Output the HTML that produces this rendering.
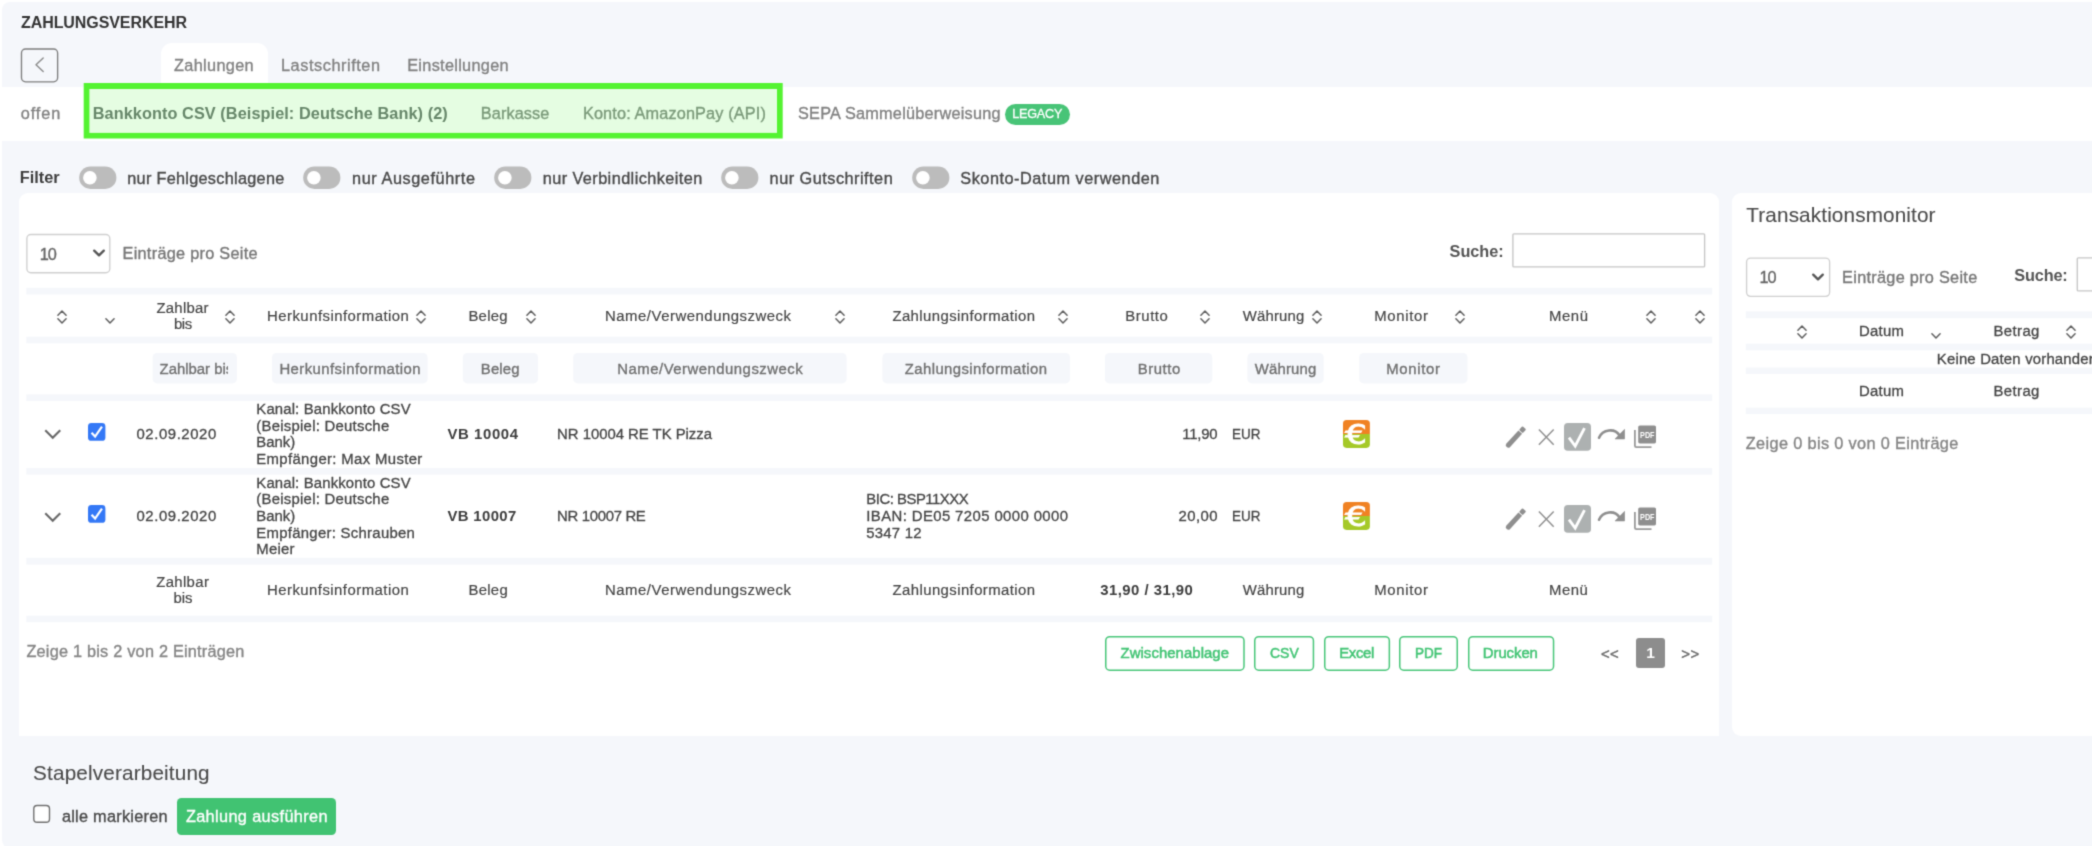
<!DOCTYPE html>
<html lang="de"><head><meta charset="utf-8"><title>Zahlungsverkehr</title>
<style>
html,body{margin:0;padding:0;}
body{width:2092px;height:846px;overflow:hidden;background:#fff;position:relative;font-family:"Liberation Sans", sans-serif;}
#root{background:#fff;position:absolute;left:0;top:0;width:2092px;height:846px;overflow:hidden;will-change:transform;filter:url(#soft);}
.a{position:absolute;box-sizing:border-box;}
.t{white-space:pre;line-height:20px;height:20px;}
</style></head><body>
<svg width="0" height="0" style="position:absolute"><defs><filter id="soft" x="0" y="0" width="100%" height="100%" color-interpolation-filters="sRGB"><feConvolveMatrix order="3" kernelMatrix="0.0256 0.1088 0.0256 0.1088 0.4624 0.1088 0.0256 0.1088 0.0256" edgeMode="duplicate" preserveAlpha="true"/></filter></defs></svg>
<div id="root">
<div class="a" style="left:2.00px;top:2.00px;width:2110.00px;height:846.00px;background:#f5f7fb;border-radius:8px;"></div>
<span class="a t" style="top:12.96px;font-size:16px;color:#333;font-weight:700;letter-spacing:-0.080px;left:21.00px;">ZAHLUNGSVERKEHR</span>
<svg class="a" style="left:19.00px;top:47.00px;" width="41.30" height="37.50" viewBox="0 0 41.3 37.5"><rect x="2.48" y="1.97" width="36.15" height="32.85" rx="4" fill="#f5f7fb" stroke="#7e7e7e" stroke-width="1.35"/></svg>
<svg class="a" style="left:30.00px;top:55.00px;" width="20.00" height="20.00" viewBox="0 0 20 20"><path d="M13.2 3 L6 9.8 L13.2 16.6" fill="none" stroke="#8a8a8a" stroke-width="1.4" stroke-linecap="round" stroke-linejoin="round"/></svg>
<div class="a" style="left:160.50px;top:42.70px;width:107.20px;height:52.30px;background:#fff;border-radius:11px 11px 0 0;"></div>
<span class="a t" style="top:55.32px;font-size:16.3px;color:#828282;-webkit-text-stroke:0.35px currentColor;letter-spacing:0.331px;left:174.00px;">Zahlungen</span>
<span class="a t" style="top:55.32px;font-size:16.3px;color:#828282;-webkit-text-stroke:0.35px currentColor;letter-spacing:0.557px;left:281.00px;">Lastschriften</span>
<span class="a t" style="top:55.32px;font-size:16.3px;color:#828282;-webkit-text-stroke:0.35px currentColor;letter-spacing:0.303px;left:407.20px;">Einstellungen</span>
<div class="a" style="left:2.00px;top:87.00px;width:2090.00px;height:53.60px;background:#fff;"></div>
<span class="a t" style="top:103.22px;font-size:16.3px;color:#828282;-webkit-text-stroke:0.35px currentColor;letter-spacing:0.895px;left:20.70px;">offen</span>
<svg class="a" style="left:83.00px;top:82.00px;" width="701.00" height="58.00" viewBox="0 0 701 58"><rect x="0.7" y="1" width="699" height="55.5" fill="#54f331"/><rect x="6.4" y="7" width="687.6" height="43.9" fill="#e5fde2"/></svg>
<span class="a t" style="top:103.22px;font-size:16.3px;color:#67876a;font-weight:700;letter-spacing:0.073px;left:92.70px;">Bankkonto CSV (Beispiel: Deutsche Bank) (2)</span>
<span class="a t" style="top:103.22px;font-size:16.3px;color:#7b9a7a;-webkit-text-stroke:0.35px currentColor;letter-spacing:0.104px;left:480.80px;">Barkasse</span>
<span class="a t" style="top:103.22px;font-size:16.3px;color:#7b9a7a;-webkit-text-stroke:0.35px currentColor;letter-spacing:0.138px;left:582.90px;">Konto: AmazonPay (API)</span>
<span class="a t" style="top:103.22px;font-size:16.3px;color:#828282;-webkit-text-stroke:0.35px currentColor;letter-spacing:0.219px;left:798.00px;">SEPA Sammelüberweisung</span>
<div class="a" style="left:1005.20px;top:103.50px;width:64.80px;height:21.10px;background:#48c477;border-radius:11px;"></div>
<span class="a t" style="top:103.97px;font-size:12.6px;color:#fff;-webkit-text-stroke:0.3px currentColor;letter-spacing:-0.182px;left:1012.20px;">LEGACY</span>
<span class="a t" style="top:167.32px;font-size:16.3px;color:#3c3c3c;font-weight:700;letter-spacing:0.018px;left:19.80px;">Filter</span>
<svg class="a" style="left:78.50px;top:166.00px;" width="38.00" height="24.00" viewBox="0 0 38 24"><rect x="0.2" y="0.5" width="37.2" height="22.4" rx="11.2" fill="#bcbcbc"/><circle cx="10.9" cy="11.7" r="6.8" fill="#fff"/></svg>
<span class="a t" style="top:168.02px;font-size:16.3px;color:#484848;-webkit-text-stroke:0.35px currentColor;letter-spacing:0.273px;left:127.30px;">nur Fehlgeschlagene</span>
<svg class="a" style="left:302.80px;top:166.00px;" width="38.00" height="24.00" viewBox="0 0 38 24"><rect x="0.2" y="0.5" width="37.2" height="22.4" rx="11.2" fill="#bcbcbc"/><circle cx="10.9" cy="11.7" r="6.8" fill="#fff"/></svg>
<span class="a t" style="top:168.02px;font-size:16.3px;color:#484848;-webkit-text-stroke:0.35px currentColor;letter-spacing:0.574px;left:352.00px;">nur Ausgeführte</span>
<svg class="a" style="left:493.80px;top:166.00px;" width="38.00" height="24.00" viewBox="0 0 38 24"><rect x="0.2" y="0.5" width="37.2" height="22.4" rx="11.2" fill="#bcbcbc"/><circle cx="10.9" cy="11.7" r="6.8" fill="#fff"/></svg>
<span class="a t" style="top:168.02px;font-size:16.3px;color:#484848;-webkit-text-stroke:0.35px currentColor;letter-spacing:0.422px;left:542.70px;">nur Verbindlichkeiten</span>
<svg class="a" style="left:720.70px;top:166.00px;" width="38.00" height="24.00" viewBox="0 0 38 24"><rect x="0.2" y="0.5" width="37.2" height="22.4" rx="11.2" fill="#bcbcbc"/><circle cx="10.9" cy="11.7" r="6.8" fill="#fff"/></svg>
<span class="a t" style="top:168.02px;font-size:16.3px;color:#484848;-webkit-text-stroke:0.35px currentColor;letter-spacing:0.484px;left:769.60px;">nur Gutschriften</span>
<svg class="a" style="left:911.50px;top:166.00px;" width="38.00" height="24.00" viewBox="0 0 38 24"><rect x="0.2" y="0.5" width="37.2" height="22.4" rx="11.2" fill="#bcbcbc"/><circle cx="10.9" cy="11.7" r="6.8" fill="#fff"/></svg>
<span class="a t" style="top:168.02px;font-size:16.3px;color:#484848;-webkit-text-stroke:0.35px currentColor;letter-spacing:0.517px;left:960.30px;">Skonto-Datum verwenden</span>
<div class="a" style="left:19.30px;top:193.00px;width:1700.00px;height:543.30px;background:#fff;border-radius:9px 9px 0 0;"></div>
<div class="a" style="left:1732.20px;top:193.00px;width:389.80px;height:543.30px;background:#fff;border-radius:9px 0 0 9px;"></div>
<svg class="a" style="left:25.00px;top:232.00px;" width="87.50" height="43.40" viewBox="0 0 87.5 43.39999999999998"><rect x="1.87" y="2.48" width="82.95" height="38.25" rx="4" fill="#fff" stroke="#d0d0d0" stroke-width="1.35"/></svg>
<span class="a t" style="top:243.52px;font-size:16.3px;color:#666;-webkit-text-stroke:0.35px currentColor;letter-spacing:-0.900px;left:39.70px;">10</span>
<svg class="a" style="left:90.50px;top:245.10px;" width="16.00" height="16.00" viewBox="0 0 16 16"><path d="M3.2 5.6 L8 10.4 L12.8 5.6" fill="none" stroke="#555" stroke-width="2.3" stroke-linecap="round" stroke-linejoin="round"/></svg>
<span class="a t" style="top:243.22px;font-size:16.3px;color:#777;-webkit-text-stroke:0.35px currentColor;letter-spacing:0.280px;left:122.50px;">Einträge pro Seite</span>
<span class="a t" style="top:241.22px;font-size:16.3px;color:#555;font-weight:700;letter-spacing:-0.059px;left:1449.60px;">Suche:</span>
<svg class="a" style="left:1511.00px;top:232.00px;" width="196.30" height="37.60" viewBox="0 0 196.29999999999995 37.60000000000002"><rect x="1.88" y="1.87" width="191.75" height="33.05" rx="1" fill="#fff" stroke="#c6c6c6" stroke-width="1.35"/></svg>
<svg class="a" style="left:26.00px;top:280.00px;" width="1688.00" height="350.00" viewBox="0 0 1688 350"><rect x="0.30" y="7.80" width="1685.90" height="6.70" fill="#f5f7fb"/><rect x="0.30" y="56.70" width="1685.90" height="6.60" fill="#f5f7fb"/><rect x="0.30" y="114.40" width="1685.90" height="6.60" fill="#f5f7fb"/><rect x="0.30" y="188.00" width="1685.90" height="6.60" fill="#f5f7fb"/><rect x="0.30" y="277.80" width="1685.90" height="6.80" fill="#f5f7fb"/><rect x="0.30" y="335.70" width="1685.90" height="6.50" fill="#f5f7fb"/></svg>
<svg class="a" style="left:54.80px;top:308.00px;" width="14.00" height="18.00" viewBox="0 0 14 18"><path d="M2.9 7.2 L7 3.05 L11.1 7.2 M2.9 10.8 L7 14.95 L11.1 10.8" fill="none" stroke="#5c5c5c" stroke-width="1.45" stroke-linecap="round" stroke-linejoin="round"/></svg>
<svg class="a" style="left:103.00px;top:308.00px;" width="14.00" height="18.00" viewBox="0 0 14 18"><path d="M2.9 10.8 L7 14.95 L11.1 10.8" fill="none" stroke="#5c5c5c" stroke-width="1.45" stroke-linecap="round" stroke-linejoin="round"/></svg>
<span class="a t" style="top:297.54px;font-size:14.9px;color:#454545;-webkit-text-stroke:0.18px currentColor;letter-spacing:0.283px;left:156.40px;">Zahlbar</span>
<span class="a t" style="top:314.04px;font-size:14.9px;color:#454545;-webkit-text-stroke:0.18px currentColor;letter-spacing:-0.473px;left:174.00px;">bis</span>
<svg class="a" style="left:222.70px;top:308.00px;" width="14.00" height="18.00" viewBox="0 0 14 18"><path d="M2.9 7.2 L7 3.05 L11.1 7.2 M2.9 10.8 L7 14.95 L11.1 10.8" fill="none" stroke="#5c5c5c" stroke-width="1.45" stroke-linecap="round" stroke-linejoin="round"/></svg>
<span class="a t" style="top:305.80px;font-size:14.9px;color:#454545;-webkit-text-stroke:0.18px currentColor;letter-spacing:0.481px;left:267.00px;">Herkunfsinformation</span>
<svg class="a" style="left:413.60px;top:308.00px;" width="14.00" height="18.00" viewBox="0 0 14 18"><path d="M2.9 7.2 L7 3.05 L11.1 7.2 M2.9 10.8 L7 14.95 L11.1 10.8" fill="none" stroke="#5c5c5c" stroke-width="1.45" stroke-linecap="round" stroke-linejoin="round"/></svg>
<span class="a t" style="top:305.80px;font-size:14.9px;color:#454545;-webkit-text-stroke:0.18px currentColor;letter-spacing:0.277px;left:468.40px;">Beleg</span>
<svg class="a" style="left:523.70px;top:308.00px;" width="14.00" height="18.00" viewBox="0 0 14 18"><path d="M2.9 7.2 L7 3.05 L11.1 7.2 M2.9 10.8 L7 14.95 L11.1 10.8" fill="none" stroke="#5c5c5c" stroke-width="1.45" stroke-linecap="round" stroke-linejoin="round"/></svg>
<span class="a t" style="top:305.80px;font-size:14.9px;color:#454545;-webkit-text-stroke:0.18px currentColor;letter-spacing:0.527px;left:605.00px;">Name/Verwendungszweck</span>
<svg class="a" style="left:832.50px;top:308.00px;" width="14.00" height="18.00" viewBox="0 0 14 18"><path d="M2.9 7.2 L7 3.05 L11.1 7.2 M2.9 10.8 L7 14.95 L11.1 10.8" fill="none" stroke="#5c5c5c" stroke-width="1.45" stroke-linecap="round" stroke-linejoin="round"/></svg>
<span class="a t" style="top:305.80px;font-size:14.9px;color:#454545;-webkit-text-stroke:0.18px currentColor;letter-spacing:0.427px;left:892.40px;">Zahlungsinformation</span>
<svg class="a" style="left:1055.70px;top:308.00px;" width="14.00" height="18.00" viewBox="0 0 14 18"><path d="M2.9 7.2 L7 3.05 L11.1 7.2 M2.9 10.8 L7 14.95 L11.1 10.8" fill="none" stroke="#5c5c5c" stroke-width="1.45" stroke-linecap="round" stroke-linejoin="round"/></svg>
<span class="a t" style="top:305.80px;font-size:14.9px;color:#454545;-webkit-text-stroke:0.18px currentColor;letter-spacing:0.553px;left:1125.30px;">Brutto</span>
<svg class="a" style="left:1198.00px;top:308.00px;" width="14.00" height="18.00" viewBox="0 0 14 18"><path d="M2.9 7.2 L7 3.05 L11.1 7.2 M2.9 10.8 L7 14.95 L11.1 10.8" fill="none" stroke="#5c5c5c" stroke-width="1.45" stroke-linecap="round" stroke-linejoin="round"/></svg>
<span class="a t" style="top:305.80px;font-size:14.9px;color:#454545;-webkit-text-stroke:0.18px currentColor;letter-spacing:0.196px;left:1242.70px;">Währung</span>
<svg class="a" style="left:1309.70px;top:308.00px;" width="14.00" height="18.00" viewBox="0 0 14 18"><path d="M2.9 7.2 L7 3.05 L11.1 7.2 M2.9 10.8 L7 14.95 L11.1 10.8" fill="none" stroke="#5c5c5c" stroke-width="1.45" stroke-linecap="round" stroke-linejoin="round"/></svg>
<span class="a t" style="top:305.80px;font-size:14.9px;color:#454545;-webkit-text-stroke:0.18px currentColor;letter-spacing:0.674px;left:1374.30px;">Monitor</span>
<svg class="a" style="left:1453.20px;top:308.00px;" width="14.00" height="18.00" viewBox="0 0 14 18"><path d="M2.9 7.2 L7 3.05 L11.1 7.2 M2.9 10.8 L7 14.95 L11.1 10.8" fill="none" stroke="#5c5c5c" stroke-width="1.45" stroke-linecap="round" stroke-linejoin="round"/></svg>
<span class="a t" style="top:305.80px;font-size:14.9px;color:#454545;-webkit-text-stroke:0.18px currentColor;letter-spacing:0.617px;left:1548.90px;">Menü</span>
<svg class="a" style="left:1643.90px;top:308.00px;" width="14.00" height="18.00" viewBox="0 0 14 18"><path d="M2.9 7.2 L7 3.05 L11.1 7.2 M2.9 10.8 L7 14.95 L11.1 10.8" fill="none" stroke="#5c5c5c" stroke-width="1.45" stroke-linecap="round" stroke-linejoin="round"/></svg>
<svg class="a" style="left:1692.50px;top:308.00px;" width="14.00" height="18.00" viewBox="0 0 14 18"><path d="M2.9 7.2 L7 3.05 L11.1 7.2 M2.9 10.8 L7 14.95 L11.1 10.8" fill="none" stroke="#5c5c5c" stroke-width="1.45" stroke-linecap="round" stroke-linejoin="round"/></svg>
<svg class="a" style="left:151.00px;top:352.00px;" width="87.90" height="33.00" viewBox="0 0 87.9 33"><rect x="1.60" y="1.0" width="84.30" height="30.4" rx="4.5" fill="#f5f7fb"/></svg>
<span class="a t" style="top:358.80px;font-size:14.9px;color:#707070;-webkit-text-stroke:0.35px currentColor;left:159.60px;width:68.30px;overflow:hidden;">Zahlbar bis</span>
<svg class="a" style="left:271.00px;top:352.00px;" width="158.60" height="33.00" viewBox="0 0 158.60000000000002 33"><rect x="1.00" y="1.0" width="155.60" height="30.4" rx="4.5" fill="#f5f7fb"/></svg>
<span class="a t" style="top:358.80px;font-size:14.9px;color:#707070;-webkit-text-stroke:0.35px currentColor;letter-spacing:0.442px;left:279.40px;">Herkunfsinformation</span>
<svg class="a" style="left:461.00px;top:352.00px;" width="79.00" height="33.00" viewBox="0 0 79 33"><rect x="1.80" y="1.0" width="75.20" height="30.4" rx="4.5" fill="#f5f7fb"/></svg>
<span class="a t" style="top:358.80px;font-size:14.9px;color:#707070;-webkit-text-stroke:0.35px currentColor;letter-spacing:0.177px;left:480.80px;">Beleg</span>
<svg class="a" style="left:572.00px;top:352.00px;" width="276.60" height="33.00" viewBox="0 0 276.6 33"><rect x="1.20" y="1.0" width="273.40" height="30.4" rx="4.5" fill="#f5f7fb"/></svg>
<span class="a t" style="top:358.80px;font-size:14.9px;color:#707070;-webkit-text-stroke:0.35px currentColor;letter-spacing:0.497px;left:617.30px;">Name/Verwendungszweck</span>
<svg class="a" style="left:881.00px;top:352.00px;" width="191.00" height="33.00" viewBox="0 0 191 33"><rect x="1.40" y="1.0" width="187.60" height="30.4" rx="4.5" fill="#f5f7fb"/></svg>
<span class="a t" style="top:358.80px;font-size:14.9px;color:#707070;-webkit-text-stroke:0.35px currentColor;letter-spacing:0.404px;left:904.80px;">Zahlungsinformation</span>
<svg class="a" style="left:1103.00px;top:352.00px;" width="111.30" height="33.00" viewBox="0 0 111.29999999999995 33"><rect x="1.90" y="1.0" width="107.40" height="30.4" rx="4.5" fill="#f5f7fb"/></svg>
<span class="a t" style="top:358.80px;font-size:14.9px;color:#707070;-webkit-text-stroke:0.35px currentColor;letter-spacing:0.553px;left:1137.70px;">Brutto</span>
<svg class="a" style="left:1246.00px;top:352.00px;" width="79.70" height="33.00" viewBox="0 0 79.70000000000005 33"><rect x="1.40" y="1.0" width="76.30" height="30.4" rx="4.5" fill="#f5f7fb"/></svg>
<span class="a t" style="top:358.80px;font-size:14.9px;color:#707070;-webkit-text-stroke:0.35px currentColor;letter-spacing:0.180px;left:1254.80px;">Währung</span>
<svg class="a" style="left:1358.00px;top:352.00px;" width="111.50" height="33.00" viewBox="0 0 111.5 33"><rect x="1.20" y="1.0" width="108.30" height="30.4" rx="4.5" fill="#f5f7fb"/></svg>
<span class="a t" style="top:358.80px;font-size:14.9px;color:#707070;-webkit-text-stroke:0.35px currentColor;letter-spacing:0.674px;left:1386.30px;">Monitor</span>
<svg class="a" style="left:42.45px;top:427.40px;" width="22.00" height="16.00" viewBox="0 0 22 16"><path d="M4 4 L10.75 10.8 L17.5 4" fill="none" stroke="#686868" stroke-width="2.1" stroke-linecap="square" stroke-linejoin="miter"/></svg>
<svg class="a" style="left:88.00px;top:423.00px;" width="18.00" height="18.00" viewBox="0 0 18 18"><rect x="0" y="0" width="17.4" height="17.8" rx="3.4" fill="#3478f6"/><path d="M3.55 9.8 L7.1 13.6 L13.95 3.65" fill="none" stroke="#fff" stroke-width="2.2" stroke-linecap="butt" stroke-linejoin="miter"/></svg>
<span class="a t" style="top:424.00px;font-size:14.9px;color:#454545;-webkit-text-stroke:0.3px currentColor;letter-spacing:0.574px;left:136.50px;">02.09.2020</span>
<span class="a t" style="top:398.80px;font-size:14.9px;color:#454545;-webkit-text-stroke:0.3px currentColor;letter-spacing:0.148px;left:256.30px;">Kanal: Bankkonto CSV</span>
<span class="a t" style="top:415.52px;font-size:14.9px;color:#454545;-webkit-text-stroke:0.3px currentColor;letter-spacing:0.256px;left:256.30px;">(Beispiel: Deutsche</span>
<span class="a t" style="top:432.24px;font-size:14.9px;color:#454545;-webkit-text-stroke:0.3px currentColor;letter-spacing:-0.027px;left:256.30px;">Bank)</span>
<span class="a t" style="top:448.96px;font-size:14.9px;color:#454545;-webkit-text-stroke:0.3px currentColor;letter-spacing:0.355px;left:256.30px;">Empfänger: Max Muster</span>
<span class="a t" style="top:424.00px;font-size:14.9px;color:#3c3c3c;font-weight:700;letter-spacing:0.624px;left:447.40px;">VB 10004</span>
<span class="a t" style="top:424.00px;font-size:14.9px;color:#454545;-webkit-text-stroke:0.3px currentColor;letter-spacing:-0.023px;left:557.10px;">NR 10004 RE TK Pizza</span>
<span class="a t" style="top:424.00px;font-size:14.9px;color:#454545;-webkit-text-stroke:0.3px currentColor;letter-spacing:-0.193px;right:874.59px;">11,90</span>
<span class="a t" style="top:424.00px;font-size:14.9px;color:#454545;-webkit-text-stroke:0.3px currentColor;left:1231.70px;transform:scaleX(0.9029);transform-origin:0 50%;">EUR</span>
<svg class="a" style="left:1342.80px;top:420.10px;" width="27.20" height="28.00" viewBox="0 0 27.2 28"><defs><clipPath id="ec420"><rect x="0" y="0" width="26.9" height="27.9" rx="3.6"/></clipPath></defs><g clip-path="url(#ec420)"><rect x="0" y="0" width="27" height="14" fill="#f08223"/><rect x="0" y="14" width="27" height="14" fill="#a5c928"/></g><text x="2.0" y="24.05" font-family="DejaVu Sans, sans-serif" font-size="27" fill="#fff" stroke="#fff" stroke-width="0.9" textLength="21.8" lengthAdjust="spacingAndGlyphs">€</text></svg>
<svg class="a" style="left:1500.00px;top:420.00px;" width="30.00" height="30.00" viewBox="0 0 30 30"><g transform="translate(8.3 25.2) rotate(-47.5)" fill="#8f8f8f"><path d="M0 -2.5 H17.7 V2.5 H0 A2.5 2.5 0 0 1 0 -2.5 Z"/><rect x="18.5" y="-2.5" width="5.2" height="5" rx="1"/></g></svg>
<svg class="a" style="left:1536.20px;top:426.90px;" width="20.00" height="20.00" viewBox="0 0 20 20"><path d="M2.9 2.5 L17.7 17.8 M17.7 2.5 L2.9 17.8" stroke="#8f8f8f" stroke-width="1.45" fill="none"/></svg>
<svg class="a" style="left:1564.40px;top:422.90px;" width="27.00" height="28.20" viewBox="0 0 27 28.2"><rect x="0" y="0" width="27" height="27.8" rx="3.8" fill="#adb1b1"/><path d="M5.0 14.6 L11.2 23.0 L20.5 5.1" fill="none" stroke="#fff" stroke-width="2.8" stroke-linejoin="miter"/></svg>
<svg class="a" style="left:1596.00px;top:424.00px;" width="32.00" height="22.00" viewBox="0 0 32 22"><path d="M3 13.75 C6.5 5 19 3.8 23.5 11.5" fill="none" stroke="#8f8f8f" stroke-width="2.6" stroke-linecap="round"/><path d="M28.5 5.4 V14.9 H19.1 Z" fill="#8f8f8f" stroke="#8f8f8f" stroke-width="0.7" stroke-linejoin="round"/></svg>
<svg class="a" style="left:1632.00px;top:423.00px;" width="27.00" height="27.00" viewBox="0 0 27 27"><rect x="6.2" y="2.5" width="17.8" height="17.9" rx="1.6" fill="#8f8f8f"/><path d="M2.9 7 V22.8 Q2.9 24.1 4.3 24.1 H19.5" fill="none" stroke="#9a9a9a" stroke-width="1.8"/><text x="8.1" y="15.2" font-family="Liberation Sans, sans-serif" font-size="9.4" font-weight="700" fill="#fff" textLength="14.4" lengthAdjust="spacingAndGlyphs">PDF</text></svg>
<svg class="a" style="left:42.45px;top:509.70px;" width="22.00" height="16.00" viewBox="0 0 22 16"><path d="M4 4 L10.75 10.8 L17.5 4" fill="none" stroke="#686868" stroke-width="2.1" stroke-linecap="square" stroke-linejoin="miter"/></svg>
<svg class="a" style="left:88.00px;top:505.30px;" width="18.00" height="18.00" viewBox="0 0 18 18"><rect x="0" y="0" width="17.4" height="17.8" rx="3.4" fill="#3478f6"/><path d="M3.55 9.8 L7.1 13.6 L13.95 3.65" fill="none" stroke="#fff" stroke-width="2.2" stroke-linecap="butt" stroke-linejoin="miter"/></svg>
<span class="a t" style="top:506.30px;font-size:14.9px;color:#454545;-webkit-text-stroke:0.3px currentColor;letter-spacing:0.574px;left:136.50px;">02.09.2020</span>
<span class="a t" style="top:472.50px;font-size:14.9px;color:#454545;-webkit-text-stroke:0.3px currentColor;letter-spacing:0.148px;left:256.30px;">Kanal: Bankkonto CSV</span>
<span class="a t" style="top:489.22px;font-size:14.9px;color:#454545;-webkit-text-stroke:0.3px currentColor;letter-spacing:0.256px;left:256.30px;">(Beispiel: Deutsche</span>
<span class="a t" style="top:505.94px;font-size:14.9px;color:#454545;-webkit-text-stroke:0.3px currentColor;letter-spacing:-0.027px;left:256.30px;">Bank)</span>
<span class="a t" style="top:522.66px;font-size:14.9px;color:#454545;-webkit-text-stroke:0.3px currentColor;letter-spacing:0.287px;left:256.30px;">Empfänger: Schrauben</span>
<span class="a t" style="top:539.38px;font-size:14.9px;color:#454545;-webkit-text-stroke:0.3px currentColor;letter-spacing:0.241px;left:256.30px;">Meier</span>
<span class="a t" style="top:506.30px;font-size:14.9px;color:#3c3c3c;font-weight:700;letter-spacing:0.381px;left:447.40px;">VB 10007</span>
<span class="a t" style="top:506.30px;font-size:14.9px;color:#454545;-webkit-text-stroke:0.3px currentColor;letter-spacing:-0.318px;left:557.10px;">NR 10007 RE</span>
<span class="a t" style="top:506.30px;font-size:14.9px;color:#454545;-webkit-text-stroke:0.3px currentColor;letter-spacing:0.459px;right:873.94px;">20,00</span>
<span class="a t" style="top:506.30px;font-size:14.9px;color:#454545;-webkit-text-stroke:0.3px currentColor;left:1231.70px;transform:scaleX(0.9029);transform-origin:0 50%;">EUR</span>
<svg class="a" style="left:1342.80px;top:502.40px;" width="27.20" height="28.00" viewBox="0 0 27.2 28"><defs><clipPath id="ec502"><rect x="0" y="0" width="26.9" height="27.9" rx="3.6"/></clipPath></defs><g clip-path="url(#ec502)"><rect x="0" y="0" width="27" height="14" fill="#f08223"/><rect x="0" y="14" width="27" height="14" fill="#a5c928"/></g><text x="2.0" y="24.05" font-family="DejaVu Sans, sans-serif" font-size="27" fill="#fff" stroke="#fff" stroke-width="0.9" textLength="21.8" lengthAdjust="spacingAndGlyphs">€</text></svg>
<svg class="a" style="left:1500.00px;top:502.30px;" width="30.00" height="30.00" viewBox="0 0 30 30"><g transform="translate(8.3 25.2) rotate(-47.5)" fill="#8f8f8f"><path d="M0 -2.5 H17.7 V2.5 H0 A2.5 2.5 0 0 1 0 -2.5 Z"/><rect x="18.5" y="-2.5" width="5.2" height="5" rx="1"/></g></svg>
<svg class="a" style="left:1536.20px;top:509.20px;" width="20.00" height="20.00" viewBox="0 0 20 20"><path d="M2.9 2.5 L17.7 17.8 M17.7 2.5 L2.9 17.8" stroke="#8f8f8f" stroke-width="1.45" fill="none"/></svg>
<svg class="a" style="left:1564.40px;top:505.20px;" width="27.00" height="28.20" viewBox="0 0 27 28.2"><rect x="0" y="0" width="27" height="27.8" rx="3.8" fill="#adb1b1"/><path d="M5.0 14.6 L11.2 23.0 L20.5 5.1" fill="none" stroke="#fff" stroke-width="2.8" stroke-linejoin="miter"/></svg>
<svg class="a" style="left:1596.00px;top:506.30px;" width="32.00" height="22.00" viewBox="0 0 32 22"><path d="M3 13.75 C6.5 5 19 3.8 23.5 11.5" fill="none" stroke="#8f8f8f" stroke-width="2.6" stroke-linecap="round"/><path d="M28.5 5.4 V14.9 H19.1 Z" fill="#8f8f8f" stroke="#8f8f8f" stroke-width="0.7" stroke-linejoin="round"/></svg>
<svg class="a" style="left:1632.00px;top:505.30px;" width="27.00" height="27.00" viewBox="0 0 27 27"><rect x="6.2" y="2.5" width="17.8" height="17.9" rx="1.6" fill="#8f8f8f"/><path d="M2.9 7 V22.8 Q2.9 24.1 4.3 24.1 H19.5" fill="none" stroke="#9a9a9a" stroke-width="1.8"/><text x="8.1" y="15.2" font-family="Liberation Sans, sans-serif" font-size="9.4" font-weight="700" fill="#fff" textLength="14.4" lengthAdjust="spacingAndGlyphs">PDF</text></svg>
<span class="a t" style="top:489.20px;font-size:14.9px;color:#454545;-webkit-text-stroke:0.3px currentColor;letter-spacing:-0.480px;left:866.30px;">BIC: BSP11XXX</span>
<span class="a t" style="top:505.92px;font-size:14.9px;color:#454545;-webkit-text-stroke:0.3px currentColor;letter-spacing:0.401px;left:866.30px;">IBAN: DE05 7205 0000 0000</span>
<span class="a t" style="top:522.64px;font-size:14.9px;color:#454545;-webkit-text-stroke:0.3px currentColor;letter-spacing:0.229px;left:866.30px;">5347 12</span>
<span class="a t" style="top:571.84px;font-size:14.9px;color:#454545;-webkit-text-stroke:0.18px currentColor;letter-spacing:0.367px;left:156.20px;">Zahlbar</span>
<span class="a t" style="top:588.44px;font-size:14.9px;color:#454545;-webkit-text-stroke:0.18px currentColor;letter-spacing:-0.073px;left:173.60px;">bis</span>
<span class="a t" style="top:579.70px;font-size:14.9px;color:#454545;-webkit-text-stroke:0.18px currentColor;letter-spacing:0.469px;left:267.00px;">Herkunfsinformation</span>
<span class="a t" style="top:579.70px;font-size:14.9px;color:#454545;-webkit-text-stroke:0.18px currentColor;letter-spacing:0.252px;left:468.60px;">Beleg</span>
<span class="a t" style="top:579.70px;font-size:14.9px;color:#454545;-webkit-text-stroke:0.18px currentColor;letter-spacing:0.527px;left:605.00px;">Name/Verwendungszweck</span>
<span class="a t" style="top:579.70px;font-size:14.9px;color:#454545;-webkit-text-stroke:0.18px currentColor;letter-spacing:0.415px;left:892.60px;">Zahlungsinformation</span>
<span class="a t" style="top:579.70px;font-size:14.9px;color:#454545;-webkit-text-stroke:0.18px currentColor;letter-spacing:0.180px;left:1242.80px;">Währung</span>
<span class="a t" style="top:579.70px;font-size:14.9px;color:#454545;-webkit-text-stroke:0.18px currentColor;letter-spacing:0.674px;left:1374.30px;">Monitor</span>
<span class="a t" style="top:579.70px;font-size:14.9px;color:#454545;-webkit-text-stroke:0.18px currentColor;letter-spacing:0.517px;left:1549.00px;">Menü</span>
<span class="a t" style="top:579.70px;font-size:14.9px;color:#3c3c3c;font-weight:700;letter-spacing:0.472px;left:1100.20px;">31,90 / 31,90</span>
<span class="a t" style="top:640.72px;font-size:16.3px;color:#858585;-webkit-text-stroke:0.35px currentColor;letter-spacing:0.222px;left:26.40px;">Zeige 1 bis 2 von 2 Einträgen</span>
<svg class="a" style="left:1103.95px;top:635.00px;" width="141.75" height="37.00" viewBox="0 0 141.75 37"><rect x="1.75" y="1.65" width="138.25" height="33.6" rx="4" fill="#fff" stroke="#48c679" stroke-width="1.5"/></svg>
<span class="a t" style="top:643.30px;font-size:14.9px;color:#42c474;-webkit-text-stroke:0.5px currentColor;letter-spacing:0.069px;left:1120.50px;">Zwischenablage</span>
<svg class="a" style="left:1253.20px;top:635.00px;" width="62.20" height="37.00" viewBox="0 0 62.200000000000045 37"><rect x="1.75" y="1.65" width="58.70" height="33.6" rx="4" fill="#fff" stroke="#48c679" stroke-width="1.5"/></svg>
<span class="a t" style="top:643.30px;font-size:14.9px;color:#42c474;-webkit-text-stroke:0.5px currentColor;left:1269.90px;transform:scaleX(0.9371);transform-origin:0 50%;">CSV</span>
<svg class="a" style="left:1323.00px;top:635.00px;" width="68.10" height="37.00" viewBox="0 0 68.09999999999991 37"><rect x="1.75" y="1.65" width="64.60" height="33.6" rx="4" fill="#fff" stroke="#48c679" stroke-width="1.5"/></svg>
<span class="a t" style="top:643.30px;font-size:14.9px;color:#42c474;-webkit-text-stroke:0.5px currentColor;letter-spacing:-0.330px;left:1339.20px;">Excel</span>
<svg class="a" style="left:1398.20px;top:635.00px;" width="61.00" height="37.00" viewBox="0 0 61.0 37"><rect x="1.75" y="1.65" width="57.50" height="33.6" rx="4" fill="#fff" stroke="#48c679" stroke-width="1.5"/></svg>
<span class="a t" style="top:643.30px;font-size:14.9px;color:#42c474;-webkit-text-stroke:0.5px currentColor;left:1414.50px;transform:scaleX(0.9095);transform-origin:0 50%;">PDF</span>
<svg class="a" style="left:1466.60px;top:635.00px;" width="88.30" height="37.00" viewBox="0 0 88.30000000000018 37"><rect x="1.75" y="1.65" width="84.80" height="33.6" rx="4" fill="#fff" stroke="#48c679" stroke-width="1.5"/></svg>
<span class="a t" style="top:643.30px;font-size:14.9px;color:#42c474;-webkit-text-stroke:0.5px currentColor;letter-spacing:-0.059px;left:1482.80px;">Drucken</span>
<span class="a t" style="top:644.20px;font-size:14.9px;color:#666;-webkit-text-stroke:0.4px currentColor;letter-spacing:0.194px;left:1601.10px;">&lt;&lt;</span>
<div class="a" style="left:1635.60px;top:637.80px;width:29.40px;height:30.40px;background:#8d8d8d;border-radius:3px;"></div>
<span class="a t" style="top:642.81px;font-size:15.5px;color:#fff;font-weight:700;left:1646.20px;">1</span>
<span class="a t" style="top:644.20px;font-size:14.9px;color:#666;-webkit-text-stroke:0.4px currentColor;letter-spacing:0.494px;left:1681.30px;">&gt;&gt;</span>
<span class="a t" style="top:205.03px;font-size:20.7px;color:#4a4a4a;-webkit-text-stroke:0.1px currentColor;letter-spacing:0.141px;left:1746.30px;">Transaktionsmonitor</span>
<svg class="a" style="left:1744.00px;top:256.00px;" width="88.30" height="43.00" viewBox="0 0 88.29999999999995 43"><rect x="2.58" y="2.07" width="83.05" height="38.25" rx="4" fill="#fff" stroke="#d0d0d0" stroke-width="1.35"/></svg>
<span class="a t" style="top:267.12px;font-size:16.3px;color:#666;-webkit-text-stroke:0.35px currentColor;letter-spacing:-0.900px;left:1759.40px;">10</span>
<svg class="a" style="left:1810.30px;top:268.70px;" width="16.00" height="16.00" viewBox="0 0 16 16"><path d="M3.2 5.6 L8 10.4 L12.8 5.6" fill="none" stroke="#555" stroke-width="2.3" stroke-linecap="round" stroke-linejoin="round"/></svg>
<span class="a t" style="top:266.82px;font-size:16.3px;color:#777;-webkit-text-stroke:0.35px currentColor;letter-spacing:0.280px;left:1842.10px;">Einträge pro Seite</span>
<span class="a t" style="top:265.02px;font-size:16.3px;color:#555;font-weight:700;letter-spacing:-0.139px;left:2014.20px;">Suche:</span>
<svg class="a" style="left:2075.00px;top:256.00px;" width="127.00" height="37.60" viewBox="0 0 127 37.60000000000002"><rect x="2.27" y="1.87" width="122.05" height="33.05" rx="1" fill="#fff" stroke="#c6c6c6" stroke-width="1.35"/></svg>
<svg class="a" style="left:1745.00px;top:305.00px;" width="360.00" height="115.00" viewBox="0 0 360 115"><rect x="0.8" y="6.30" width="360" height="6.90" fill="#f5f7fb"/><rect x="0.8" y="38.70" width="360" height="6.60" fill="#f5f7fb"/><rect x="0.8" y="62.50" width="360" height="6.40" fill="#f5f7fb"/><rect x="0.8" y="102.60" width="360" height="6.50" fill="#f5f7fb"/></svg>
<svg class="a" style="left:1794.50px;top:322.80px;" width="14.00" height="18.00" viewBox="0 0 14 18"><path d="M2.9 7.2 L7 3.05 L11.1 7.2 M2.9 10.8 L7 14.95 L11.1 10.8" fill="none" stroke="#5c5c5c" stroke-width="1.45" stroke-linecap="round" stroke-linejoin="round"/></svg>
<span class="a t" style="top:320.70px;font-size:14.9px;color:#454545;-webkit-text-stroke:0.3px currentColor;letter-spacing:0.285px;left:1859.00px;">Datum</span>
<svg class="a" style="left:1928.90px;top:322.80px;" width="14.00" height="18.00" viewBox="0 0 14 18"><path d="M2.9 10.8 L7 14.95 L11.1 10.8" fill="none" stroke="#5c5c5c" stroke-width="1.45" stroke-linecap="round" stroke-linejoin="round"/></svg>
<span class="a t" style="top:320.70px;font-size:14.9px;color:#454545;-webkit-text-stroke:0.3px currentColor;letter-spacing:0.425px;left:1993.40px;">Betrag</span>
<svg class="a" style="left:2064.00px;top:322.80px;" width="14.00" height="18.00" viewBox="0 0 14 18"><path d="M2.9 7.2 L7 3.05 L11.1 7.2 M2.9 10.8 L7 14.95 L11.1 10.8" fill="none" stroke="#5c5c5c" stroke-width="1.45" stroke-linecap="round" stroke-linejoin="round"/></svg>
<span class="a t" style="top:348.70px;font-size:14.9px;color:#454545;-webkit-text-stroke:0.3px currentColor;letter-spacing:0.187px;left:1936.80px;">Keine Daten vorhanden</span>
<span class="a t" style="top:380.70px;font-size:14.9px;color:#454545;-webkit-text-stroke:0.3px currentColor;letter-spacing:0.285px;left:1859.00px;">Datum</span>
<span class="a t" style="top:380.70px;font-size:14.9px;color:#454545;-webkit-text-stroke:0.3px currentColor;letter-spacing:0.425px;left:1993.40px;">Betrag</span>
<span class="a t" style="top:432.62px;font-size:16.3px;color:#858585;-webkit-text-stroke:0.35px currentColor;letter-spacing:0.361px;left:1745.80px;">Zeige 0 bis 0 von 0 Einträge</span>
<span class="a t" style="top:762.63px;font-size:20.7px;color:#4a4a4a;-webkit-text-stroke:0.1px currentColor;letter-spacing:0.166px;left:33.10px;">Stapelverarbeitung</span>
<svg class="a" style="left:32.00px;top:803.00px;" width="20.20" height="21.90" viewBox="0 0 20.200000000000003 21.899999999999977"><rect x="1.80" y="2.50" width="15.70" height="16.70" rx="3.3" fill="#fff" stroke="#707070" stroke-width="1.4"/></svg>
<span class="a t" style="top:806.42px;font-size:16.3px;color:#484848;-webkit-text-stroke:0.35px currentColor;letter-spacing:0.264px;left:61.90px;">alle markieren</span>
<div class="a" style="left:176.80px;top:798.00px;width:159.50px;height:37.10px;background:#41c372;border-radius:4.5px;"></div>
<span class="a t" style="top:806.22px;font-size:16.3px;color:#fff;-webkit-text-stroke:0.35px currentColor;letter-spacing:0.364px;left:185.90px;">Zahlung ausführen</span>
</div>
</body></html>
